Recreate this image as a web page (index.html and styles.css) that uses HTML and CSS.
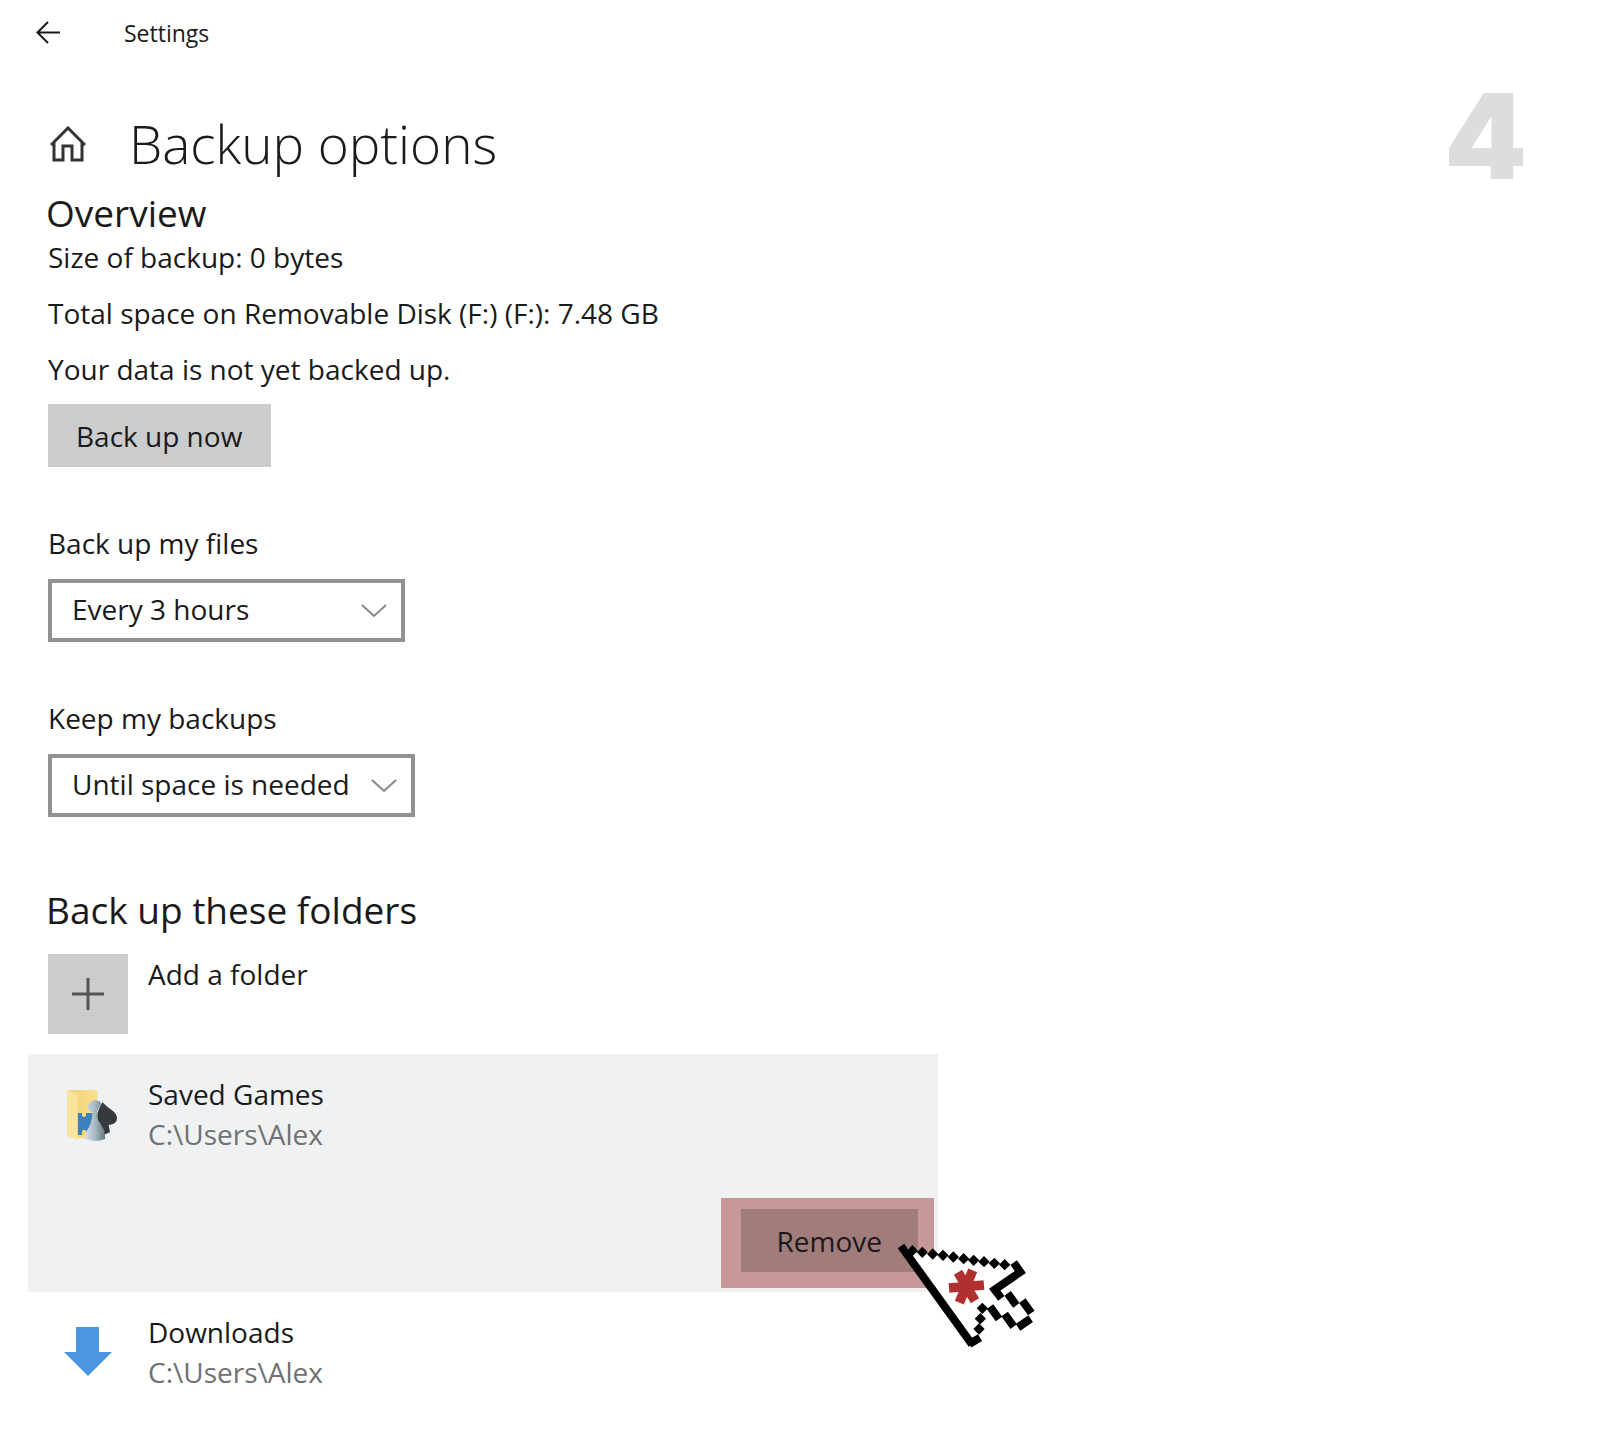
FILE: index.html
```html
<!DOCTYPE html>
<html lang="en">
<head>
<meta charset="utf-8">
<meta name="viewport" content="width=device-width, initial-scale=1">
<title>Settings - Backup options</title>
<link rel="stylesheet" href="styles.css">
</head>
<body>
<header class="titlebar">
  <button class="icon-button" type="button" aria-label="Back">
    <svg class="back-icon" viewBox="0 0 24 24" aria-hidden="true"><path d="M24 11.500H1.500M12 1 1.500 11.500 12 22"/></svg>
  </button>
  <span class="app-name">Settings</span>
</header>
<main class="page">
  <div class="page-header">
    <button class="icon-button" type="button" aria-label="Home">
      <svg class="home-icon" viewBox="0 0 36 36" aria-hidden="true"><path d="M1 19 18 2l17 17M4 16v18h9V20h9v14h10V16"/></svg>
    </button>
    <h1 class="page-title">Backup options</h1>
    <span class="step">4</span>
  </div>

  <section class="overview">
    <h2 class="section-title">Overview</h2>
    <p class="info">Size of backup: 0 bytes</p>
    <p class="info">Total space on Removable Disk (F:) (F:): 7.48 GB</p>
    <p class="info">Your data is not yet backed up.</p>
    <button class="button" type="button">Back up now</button>
  </section>

  <div class="field">
    <label for="frequency">Back up my files</label>
    <div class="select">
      <select id="frequency"><option>Every 3 hours</option></select>
      <svg class="chevron" viewBox="0 0 26 14" aria-hidden="true"><path d="m1 1 12 11L25 1"/></svg>
    </div>
  </div>
  <div class="field">
    <label for="retention">Keep my backups</label>
    <div class="select">
      <select id="retention"><option>Until space is needed</option></select>
      <svg class="chevron" viewBox="0 0 26 14" aria-hidden="true"><path d="m1 1 12 11L25 1"/></svg>
    </div>
  </div>

  <section class="folders">
    <h2 class="section-title">Back up these folders</h2>
    <div class="add-row">
      <button class="add-button" id="add" type="button" aria-labelledby="add-label">
        <svg class="plus" viewBox="0 0 32 32" aria-hidden="true"><path d="M0 16h32M16 0v32"/></svg>
      </button>
      <label class="folder-name" id="add-label" for="add">Add a folder</label>
    </div>
    <ul class="folder-list">
      <li class="folder selected">
        <div class="folder-row">
          <svg class="folder-icon" viewBox="-6 -9 168 168" aria-hidden="true">
            <defs>
              <linearGradient id="metal"><stop offset="0" stop-color="#d3e0e5"/><stop offset=".5" stop-color="#a5b8c0"/><stop offset="1" stop-color="#617681"/></linearGradient>
              <linearGradient id="sheet"><stop offset="0" stop-color="#f0d27a"/><stop offset="1" stop-color="#fae08a"/></linearGradient>
            </defs>
            <path fill="url(#sheet)" d="M4 3h90v145H28L4 140z"/>
            <path fill="#3e80bd" d="M35 72h45v66H35z"/>
            <path fill="#f6d774" d="M48 72h12v8q-6 8-12 0zM48 138v-12q6-8 12 0v12z"/>
            <path fill="#fbe49b" d="m4 3 31 14v136L4 140z"/>
            <path fill="#343a3e" d="M109 40q14 14 32 26 12 10 12 22 0 18-25 20l4 22-18 7-20-40V76q2-12 15-36z"/>
            <path fill="url(#metal)" d="M80 72q-19-12-13-26 8-12 23-12 10 0 16 9-4 12-12 23-4 22 8 36l12 20 4 27q-28 14-60 0l2-21q16-17 20-56z"/>
          </svg>
          <div class="folder-text">
            <div class="folder-name">Saved Games</div>
            <div class="folder-path">C:\Users\Alex</div>
          </div>
        </div>
        <div class="highlight">
          <button class="button remove" type="button">Remove</button>
          <svg class="pointer" viewBox="0 0 480 390" aria-hidden="true">
            <path fill="#fff" d="M33 52 378 107l14 20-80 52 112 65-34 44-105-51-25 90z"/>
            <g fill="none" stroke="#000" stroke-width="24">
              <path d="M33 48 246 343"/>
              <path d="m238 342 32-19"/>
              <path d="m371 98 20 28-77 53 20 26"/>
              <path d="m353 190 26 36M397 212l27 37M422 266l-38 26M344 252l27 38M300 230l27 37"/>
            </g>
            <path fill="#000" d="m67 45 17 17-17 17-17-17zM97 50l17 17-17 17-17-17zM128 55l17 17-17 17-17-17zM159 59l17 17-17 17-17-17zM190 64l17 17-17 17-17-17zM221 69l17 17-17 17-17-17zM251 74l17 17-17 17-17-17zM282 78l17 17-17 17-17-17zM313 83l17 17-17 17-17-17zM344 87l17 17-17 17-17-17zM277 218l17 17-17 17-17-17zM271 249l17 17-17 17-17-17zM267 280l17 17-17 17-17-17z"/>
            <path fill="none" stroke="#b03030" stroke-width="29" d="m177 174 105-9M204 127l51 85M248 121l-40 97"/>
          </svg>
        </div>
      </li>
      <li class="folder">
        <div class="folder-row">
          <svg class="folder-icon" viewBox="0 0 56 56" aria-hidden="true"><path fill="#4c96df" d="M12 3h23v25h13L24 52 0 28h12z"/></svg>
          <div class="folder-text">
            <div class="folder-name">Downloads</div>
            <div class="folder-path">C:\Users\Alex</div>
          </div>
        </div>
      </li>
    </ul>
  </section>
</main>
</body>
</html>
```
FILE: styles.css
```css
* { box-sizing: border-box; }

body {
  margin: 0;
  background: #fff;
  color: #1a1a1a;
  font: 28px/40px "Open Sans", "Noto Sans", sans-serif;
}

h1, h2, p, ul { margin: 0; padding: 0; font-weight: 400; }

button, select { font: inherit; color: inherit; border: 0; border-radius: 0; cursor: pointer; }

svg { display: block; fill: none; }

.icon-button { padding: 0; background: none; }

.titlebar {
  display: flex;
  align-items: center;
  gap: 64px;
  height: 64px;
  padding: 2px 0 0 36px;
}
.app-name { font-size: 23px; }
.back-icon { width: 24px; height: 24px; stroke: #1a1a1a; stroke-width: 2; }

.page { padding: 0 48px; }

.page-header {
  display: flex;
  align-items: center;
  height: 133px;
  padding: 26px 25px 0 2px;
}
.home-icon { width: 36px; height: 36px; stroke: #333; stroke-width: 3; }
.page-title { margin-left: 43px; font-size: 53px; line-height: 72px; font-weight: 300; }
.step { align-self: flex-start; margin-left: auto; font: 900 118px/92px "Inter", sans-serif; color: #dcddde; }

.section-title { margin-left: -2px; font-size: 37px; line-height: 48px; }
.overview .section-title { line-height: 32px; }
.info { line-height: 56px; }

.button {
  height: 63px;
  padding: 0 29px 0 28px;
  background: #cbcccd;
}
.overview .button { margin-top: 7px; }

.field { display: grid; justify-items: start; gap: 16px; margin-top: 56px; }

.select { display: grid; align-items: center; justify-items: end; min-width: 357px; }
.select > * { grid-area: 1 / 1; }
.select select {
  appearance: none;
  width: 100%;
  height: 63px;
  padding: 0 61px 3px 20px;
  border: 4px solid #929292;
  background: #fff;
}
.chevron { width: 26px; height: 14px; margin-right: 18px; stroke: #888; stroke-width: 2; pointer-events: none; }

.folders { margin-top: 69px; }
.add-row { display: flex; gap: 20px; margin: 20px 0; }
.add-button { display: grid; place-items: center; width: 80px; height: 80px; padding: 0; background: #cbcccd; }
.plus { width: 32px; height: 32px; stroke: #555; stroke-width: 3; }

.folder-list { list-style: none; max-width: 910px; margin-left: -20px; }
.folder { padding: 20px 4px 4px 36px; }
.selected { background: #f0f1f3; }
.folder-row { display: flex; gap: 28px; align-items: center; }
.folder-icon { width: 56px; height: 56px; }
.folder-path { color: #717171; }

.highlight {
  position: relative;
  width: fit-content;
  margin: 44px 0 0 auto;
  padding: 11px 16px 16px 20px;
  background: #c89898;
}
.remove { display: block; padding: 0 36px; background: #a07c7b; }
.pointer { position: absolute; left: 169px; top: 32px; width: 160px; height: 130px; pointer-events: none; }
```
